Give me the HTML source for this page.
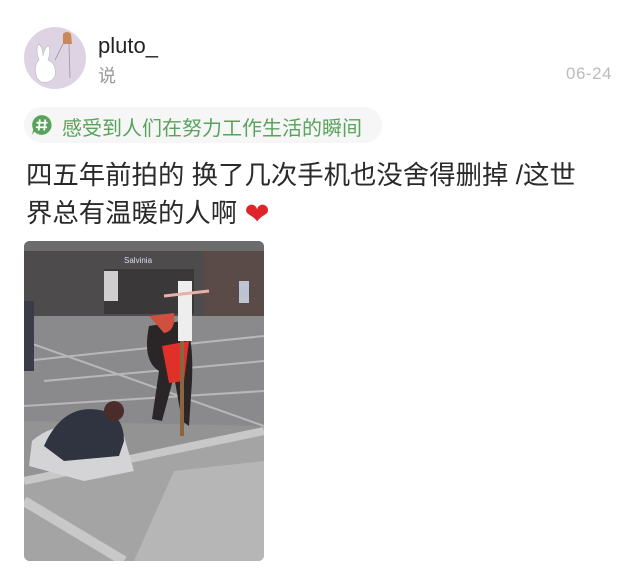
<!DOCTYPE html>
<html><head><meta charset="utf-8"><style>
*{margin:0;padding:0;box-sizing:border-box}
body{width:640px;height:578px;background:#fff;position:relative;overflow:hidden;font-family:"Liberation Sans","Noto Sans CJK SC",sans-serif}
.abs{position:absolute}
.name{left:98px;top:33px;font-size:22px;color:#222}
.shuo{left:98px;top:62px;font-size:18px;color:#999}
.date{left:566px;top:64px;font-size:17px;color:#bbb;letter-spacing:0.5px}
.tag{left:24px;top:107px;width:358px;height:36px;border-radius:18px;background:#f5f6f5;}
.tagt{left:62px;top:112px;font-size:20px;color:#5aa35c;white-space:nowrap}
.txt{left:26px;top:156px;font-size:26.4px;line-height:38px;color:#2a2a2a;width:600px;white-space:nowrap}
</style></head><body>
<svg class="abs" style="left:23px;top:26px" width="64" height="64" viewBox="0 0 64 64">
<circle cx="32" cy="32" r="31" fill="#ddd3e3"/>
<path d="M14 52 Q10 40 16 34 Q12 22 16 18 Q20 22 20 30 Q22 20 26 20 Q28 26 25 34 Q34 38 32 50 Q28 58 18 56Z" fill="#fff" stroke="#bbb" stroke-width="0.6"/>
<line x1="32" y1="34" x2="42" y2="14" stroke="#888" stroke-width="0.6"/>
<line x1="46" y1="18" x2="47" y2="52" stroke="#999" stroke-width="0.8"/>
<path d="M40 8 Q44 4 48 8 L49 18 L40 18Z" fill="#c9875a"/>
</svg>
<div class="abs name">pluto_</div>
<div class="abs shuo">说</div>
<div class="abs date">06-24</div>
<div class="abs tag"></div>
<svg class="abs" style="left:31px;top:114px" width="22" height="22" viewBox="0 0 20 20">
<path d="M10 1 A9 9 0 1 1 3 16 L1 19 L2 14 A9 9 0 0 1 10 1Z" fill="#5aa35c"/>
<path d="M8 5 L7 15 M13 5 L12 15 M5 8 H15 M4.5 12 H14.5" stroke="#fff" stroke-width="1.6"/>
</svg>
<div class="abs tagt">感受到人们在努力工作生活的瞬间</div>
<div class="abs txt">四五年前拍的 换了几次手机也没舍得删掉 /这世<br>界总有温暖的人啊 <span style="color:#e0242c;font-size:30px;position:relative;top:2px">❤</span></div>
<svg class="abs" style="left:24px;top:241px;border-radius:6px" width="240" height="320" viewBox="0 0 240 320">
<rect width="240" height="320" fill="#939394"/>
<rect width="240" height="75" fill="#4d4b4c"/>
<rect x="0" y="0" width="240" height="10" fill="#6d6c6c"/>
<rect x="80" y="28" width="90" height="45" fill="#3a3838"/>
<rect x="80" y="30" width="14" height="30" fill="#cfcfcf"/>
<text x="100" y="22" font-size="8" fill="#dde" font-family="Liberation Sans">Salvinia</text>
<rect x="180" y="10" width="60" height="65" fill="#5a4a48"/>
<rect x="215" y="40" width="10" height="22" fill="#bcc4d4"/>
<polygon points="0,75 240,75 240,185 0,180" fill="#8a8a8c"/>
<path d="M0 120 L240 95 M20 140 L240 120 M0 165 L240 150 M0 100 L240 185" stroke="#b8b8ba" stroke-width="2" fill="none"/>
<polygon points="0,240 240,190 240,320 0,320" fill="#a4a4a4"/>
<path d="M0 240 L240 190" stroke="#c8c8c8" stroke-width="8"/>
<path d="M0 260 L100 320" stroke="#c8c8c8" stroke-width="10"/>
<polygon points="150,230 240,220 240,320 110,320" fill="#b6b6b6"/>
<path d="M8 200 Q30 180 70 185 L100 195 L110 230 L60 240 L5 225Z" fill="#d4d4d6"/>
<path d="M20 205 Q40 160 80 170 Q100 175 100 200 L95 215 L40 220Z" fill="#2f3440"/>
<circle cx="90" cy="170" r="10" fill="#4a2c2a"/>
<path d="M125 85 L158 80 Q170 90 168 140 L165 185 L158 180 L150 135 L138 180 L128 178 L135 130 Q118 120 125 85Z" fill="#2a2628"/>
<path d="M125 75 L150 72 Q152 90 140 92 Z" fill="#d05040"/>
<path d="M138 105 L165 100 L160 140 L145 142Z" fill="#e0302a"/>
<rect x="154" y="40" width="14" height="60" fill="#eee"/>
<path d="M140 55 L185 50" stroke="#e8b0a8" stroke-width="3"/>
<rect x="156" y="100" width="4" height="95" fill="#8a6540"/>
<rect x="0" y="60" width="10" height="70" fill="#3a3d48"/>
</svg>
</body></html>
